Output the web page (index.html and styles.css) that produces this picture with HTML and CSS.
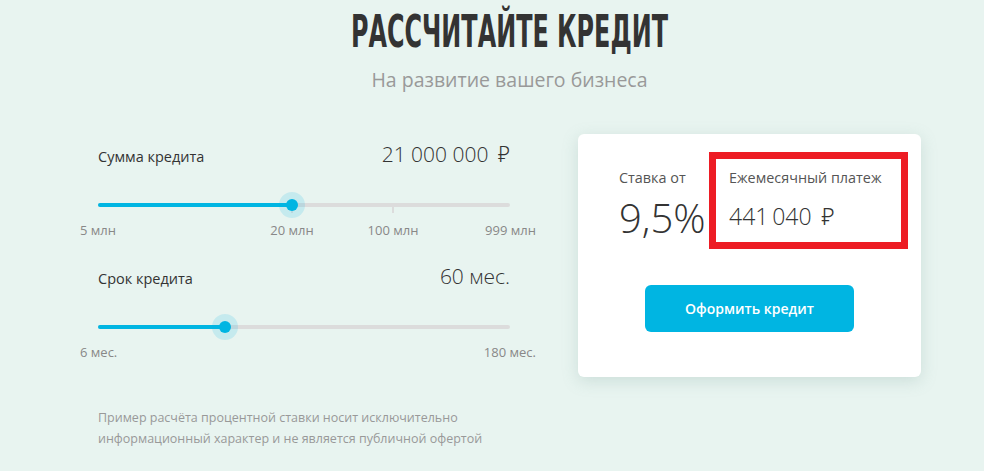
FILE: index.html
```html
<html>
  <head>
    <meta charset="utf-8">
    <link rel="stylesheet" href="styles.css">
  </head>
  <body>
    <div class="page">
      <div class="header">
        <h1 class="title">Рассчитайте кредит</h1>
        <p class="subtitle">На развитие вашего бизнеса</p>
      </div>

      <div class="calc">
        <div class="params">
          <div class="field">
            <div class="field-head">
              <span class="field-name">Сумма кредита</span>
              <span class="field-value">21 000 000 <span class="rub">₽</span></span>
            </div>
            <div class="slider">
              <div class="track">
                <div class="tick" style="left: 47.1%"></div>
                <div class="tick" style="left: 71.6%"></div>
                <div class="fill" style="width: 47.1%"></div>
                <div class="thumb" style="left: 47.1%"></div>
              </div>
            </div>
            <div class="scale">
              <span>5 млн</span>
              <span class="mark" style="left: 212px">20 млн</span>
              <span class="mark" style="left: 313px">100 млн</span>
              <span>999 млн</span>
            </div>
          </div>

          <div class="field">
            <div class="field-head">
              <span class="field-name">Срок кредита</span>
              <span class="field-value">60 мес.</span>
            </div>
            <div class="slider">
              <div class="track">
                <div class="fill" style="width: 30.8%"></div>
                <div class="thumb" style="left: 30.8%"></div>
              </div>
            </div>
            <div class="scale">
              <span>6 мес.</span>
              <span>180 мес.</span>
            </div>
          </div>

          <p class="note">Пример расчёта процентной ставки носит исключительно информационный характер и не является публичной офертой</p>
        </div>

        <div class="card">
          <div class="results">
            <div class="result rate-box">
              <div class="result-name">Ставка от</div>
              <div class="rate">9,5%</div>
            </div>
            <div class="result highlight">
              <div class="result-name">Ежемесячный платеж</div>
              <div class="payment">441&#8201;040 <span class="rub">₽</span></div>
            </div>
          </div>
          <button class="btn">Оформить кредит</button>
        </div>
      </div>
    </div>
  </body>
</html>
```

FILE: styles.css
```css
body {
  margin: 0;
  background-color: #e8f4f0;
  font-family: "Open Sans", "Noto Sans", sans-serif;
  color: #333;
}

.page {
  padding-left: 35px;
}

.header {
  text-align: center;
}

.title {
  margin: 0;
  padding-top: 8px;
  font-family: "DejaVu Sans Condensed", "Liberation Sans Narrow", sans-serif;
  font-size: 45px;
  line-height: 48px;
  font-weight: bold;
  text-transform: uppercase;
  color: #333;
  transform: scaleX(0.59);
}

.subtitle {
  margin: 11px 0 0;
  font-size: 19.5px;
  line-height: 26px;
  color: #999;
}

.calc {
  display: flex;
  margin: 47px 0 0 45px;
  gap: 42px;
  align-items: flex-start;
}

.params {
  width: 456px;
}

.field-head {
  display: flex;
  justify-content: space-between;
  align-items: baseline;
  padding: 0 26px 0 18px;
}

.field-name {
  font-size: 14.5px;
}

.field-value {
  font-size: 21px;
  font-weight: 300;
}

.rub {
  margin-left: 4px;
}

.slider {
  padding: 35px 26px 0 18px;
}

.track {
  position: relative;
  height: 4px;
  border-radius: 2px;
  background-color: #dcdcdc;
}

.fill {
  height: 4px;
  border-radius: 2px;
  background-color: #00b5e2;
}

.tick {
  position: absolute;
  top: 2px;
  width: 2px;
  height: 8px;
  margin-left: -1px;
  background-color: #dcdcdc;
}

.thumb {
  position: absolute;
  top: 2px;
  width: 12px;
  height: 12px;
  margin: -6px 0 0 -6px;
  border-radius: 50%;
  background-color: #00b5e2;
  box-shadow: 0 0 0 7px rgba(0, 181, 226, 0.15);
}

.scale {
  position: relative;
  display: flex;
  justify-content: space-between;
  margin-top: 14px;
  font-size: 13px;
  color: #888;
}

.scale .mark {
  position: absolute;
  top: 0;
  transform: translateX(-50%);
}

.field + .field {
  margin-top: 23px;
}

.note {
  margin: 46px 0 0 18px;
  font-size: 12.5px;
  line-height: 21px;
  color: #999;
}

.card {
  width: 343px;
  height: 243px;
  box-sizing: border-box;
  margin-top: -6px;
  padding: 18px 13px 0 41px;
  border-radius: 6px;
  background-color: #fff;
  box-shadow: 0 4px 16px rgba(120, 160, 150, 0.25);
}

.results {
  display: flex;
  align-items: flex-start;
}

.rate-box {
  width: 90px;
  flex-shrink: 0;
  white-space: nowrap;
}

.result-name {
  font-size: 14.4px;
  line-height: 20px;
  color: #555;
  margin-top: 16px;
}

.rate {
  font-size: 40px;
  font-weight: 300;
  line-height: 40px;
  margin-top: 10px;
}

.highlight {
  width: 199px;
  height: 97px;
  box-sizing: border-box;
  padding-left: 13px;
  border: 7px solid #ed1c24;
}

.highlight .result-name {
  margin-top: 9px;
}

.payment {
  font-size: 23px;
  font-weight: 300;
  margin-top: 12px;
}

.btn {
  display: block;
  width: 209px;
  height: 47px;
  margin: 36px 0 0 26px;
  border: none;
  border-radius: 6px;
  background-color: #00b5e2;
  color: #fff;
  font-family: "Open Sans", "Noto Sans", sans-serif;
  font-size: 14px;
  font-weight: 600;
}
```
